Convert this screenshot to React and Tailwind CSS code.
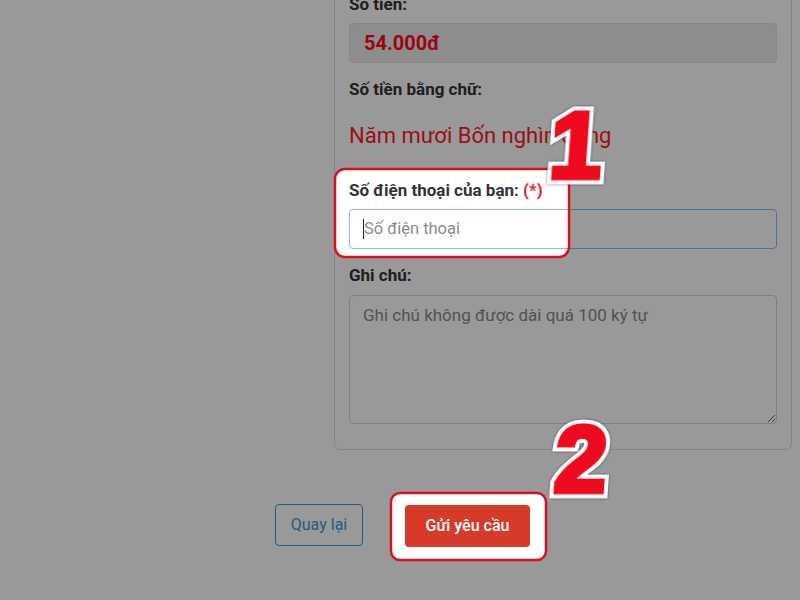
import React from "react";

// vung sang (khong bi lam mo) cua anh huong dan
const holes = [
  { x: 335, y: 169, w: 234, h: 88, r: 10 },
  { x: 391, y: 493, w: 155, h: 67, r: 9 },
];

function roundRect({ x, y, w, h, r }) {
  return `M${x + r},${y} H${x + w - r} A${r},${r} 0 0 1 ${x + w},${y + r} V${y + h - r} A${r},${r} 0 0 1 ${x + w - r},${y + h} H${x + r} A${r},${r} 0 0 1 ${x},${y + h - r} V${y + r} A${r},${r} 0 0 1 ${x + r},${y} Z`;
}

function Overlay() {
  const d = "M0,0 H800 V600 H0 Z " + holes.map(roundRect).join(" ");
  return (
    <svg className="absolute inset-0 pointer-events-none" width="800" height="600" viewBox="0 0 800 600">
      <path d={d} fill="rgba(0,0,0,0.4)" fillRule="evenodd" />
      {holes.map((h, i) => (
        <path key={i} d={roundRect(h)} fill="none" stroke="#d8121c" strokeWidth="2.5" />
      ))}
    </svg>
  );
}

function Step({ n, className }) {
  const base = "col-start-1 row-start-1 font-bold text-[94px] leading-none";
  return (
    <div
      className={"absolute grid -skew-x-[4deg] [filter:drop-shadow(0_0_1px_rgba(0,0,0,0.6))] " + className}
      style={{ fontFamily: '"Liberation Sans", Arial, sans-serif' }}
    >
      <span className={base + " text-white [-webkit-text-stroke:13px_white]"}>{n}</span>
      <span className={base + " text-[#ee0a1f] [-webkit-text-stroke:5px_#ee0a1f]"}>{n}</span>
    </div>
  );
}

export default function App() {
  return (
    <div
      className="relative w-[800px] h-[600px] overflow-hidden bg-white text-[#333]"
      style={{ fontFamily: "Roboto, 'Noto Sans', sans-serif" }}
    >
      <div className="ml-[334px] w-[458px] -mt-[40px] pt-[31px] px-[14px] pb-[25px] border border-[#dcdcdc] rounded-[6px]">
        <p className="text-[17px] leading-[24px] font-bold">Số tiền:</p>
        <div className="mt-[7px] h-[40px] flex items-center px-[14px] bg-[#ececec] border border-[#e2e2e2] rounded-[4px]">
          <span className="text-[20px] font-bold text-[#ff0a14]">54.000đ</span>
        </div>
        <p className="mt-[14px] text-[17px] leading-[24px] font-bold">Số tiền bằng chữ:</p>
        <p className="mt-[19px] text-[22px] leading-[32px] text-[#ff1a22]">Năm mươi Bốn nghìn đồng</p>
        <p className="mt-[26px] text-[17px] leading-[24px] font-bold">
          Số điện thoại của bạn: <span className="text-[#e5262c]">(*)</span>
        </p>
        <div className="mt-[7px] h-[40px] flex items-center px-[13px] border border-[#80bdff] rounded-[4px] text-[16.5px] text-[#8a8a8a]">
          <span className="w-px h-[20px] bg-[#222]" />
          <span>Số điện thoại</span>
        </div>
        <p className="mt-[14px] text-[17px] leading-[24px] font-bold">Ghi chú:</p>
        <textarea
          className="mt-[8px] block w-full h-[129px] px-[13px] py-[7px] border border-[#d4d4d4] rounded-[4px] text-[17px] leading-[24px] placeholder:text-[#8a8a8a] outline-none"
          placeholder="Ghi chú không được dài quá 100 ký tự"
        />
      </div>

      <div className="mt-[54px] flex justify-center gap-[42px] pl-[5px]">
        <button className="w-[88px] h-[42px] border border-[#3f96d4] rounded-[4px] text-[16px] text-[#3f96d4]">
          Quay lại
        </button>
        <button className="mt-px w-[125px] h-[42px] bg-[#d63a29] rounded-[4px] text-[16px] font-medium text-white">
          Gửi yêu cầu
        </button>
      </div>

      <Overlay />
      <Step n="1" className="left-[550px] top-[99px]" />
      <Step n="2" className="left-[555px] top-[413px]" />
    </div>
  );
}
